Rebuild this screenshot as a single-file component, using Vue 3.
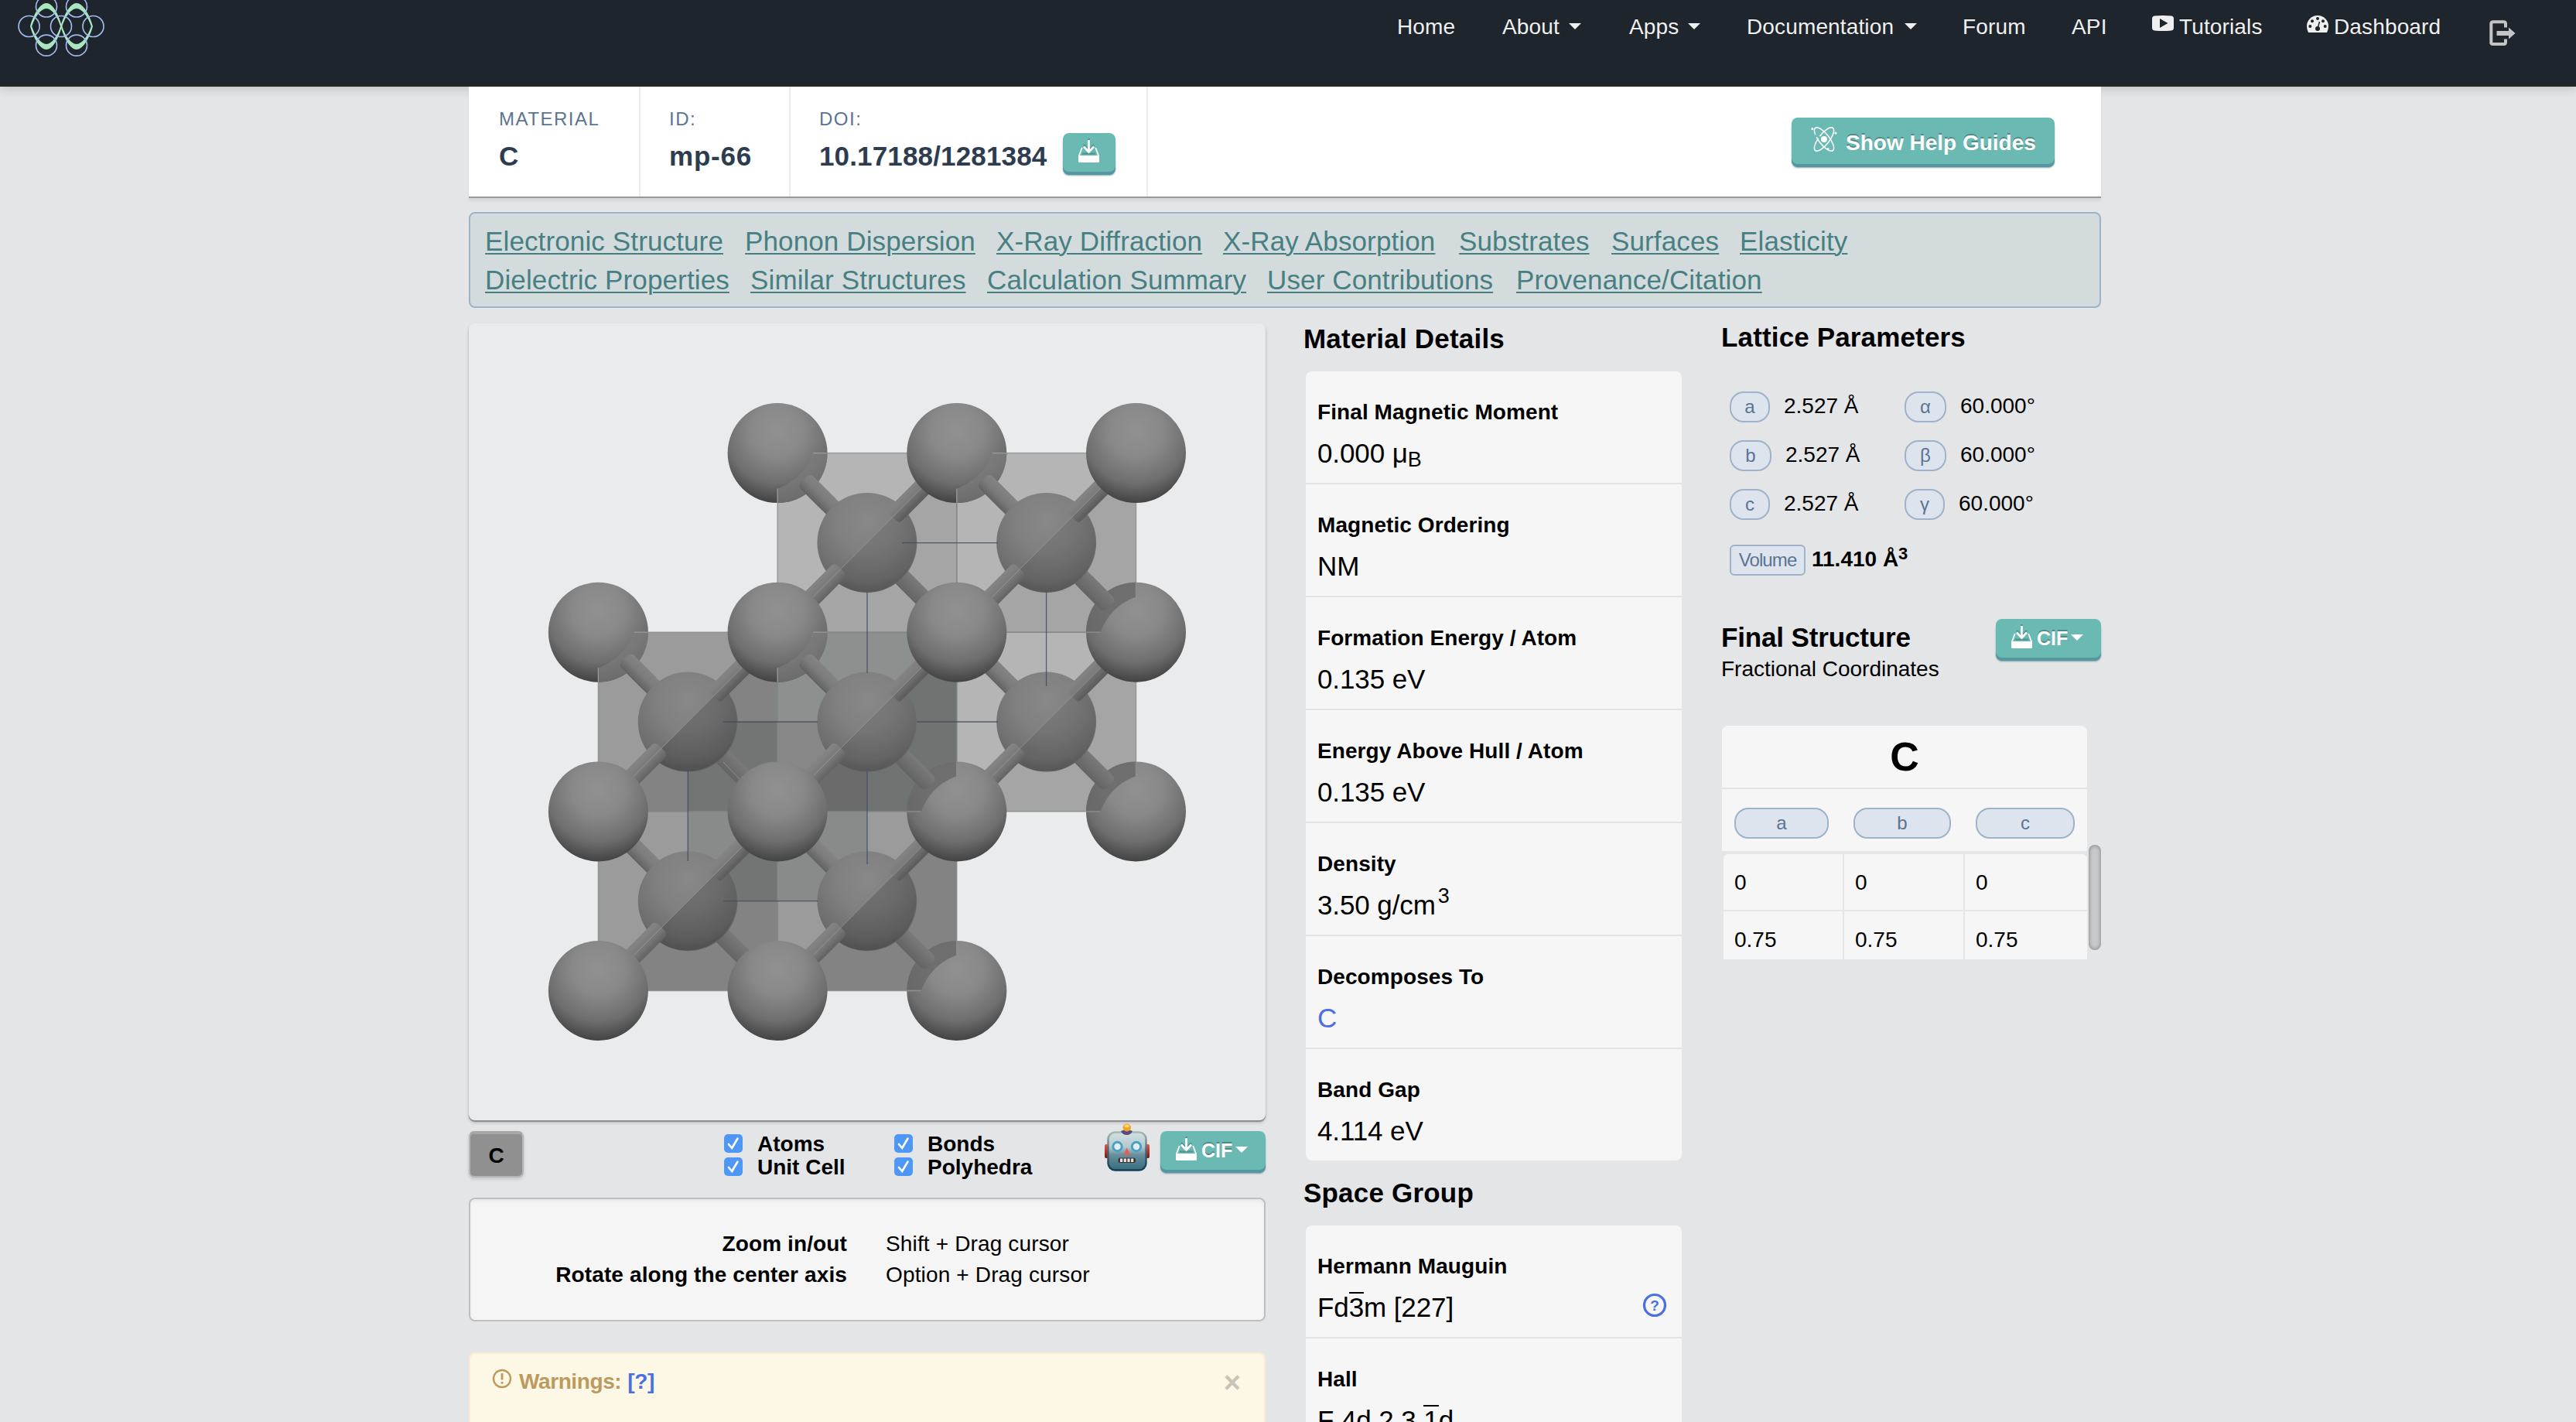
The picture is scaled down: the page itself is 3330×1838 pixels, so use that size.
<script setup>
const nav = [
  { label: 'Home', item: 136, text: 80 },
  { label: 'About', item: 164, text: 87, caret: true },
  { label: 'Apps', item: 152, text: 77, caret: true },
  { label: 'Documentation', item: 279, text: 205, caret: true },
  { label: 'Forum', item: 141, text: 90 },
  { label: 'API', item: 105, text: 60 },
]

const links = [
  [
    ['Electronic Structure', 336], ['Phonon Dispersion', 325], ['X-Ray Diffraction', 293],
    ['X-Ray Absorption', 305], ['Substrates', 197], ['Surfaces', 166], ['Elasticity', 140],
  ],
  [
    ['Dielectric Properties', 343], ['Similar Structures', 306], ['Calculation Summary', 362],
    ['User Contributions', 322], ['Provenance/Citation', 320],
  ],
]

const details = [
  { label: 'Final Magnetic Moment', value: '0.000 μ', sub: 'B' },
  { label: 'Magnetic Ordering', value: 'NM' },
  { label: 'Formation Energy / Atom', value: '0.135 eV' },
  { label: 'Energy Above Hull / Atom', value: '0.135 eV' },
  { label: 'Density', value: '3.50 g/cm', sup: '3' },
  { label: 'Decomposes To', value: 'C', link: true },
  { label: 'Band Gap', value: '4.114 eV' },
]

const lattice = [
  { k: 'a', v: '2.527 Å', w: 52, g: 'α', a: '60.000°', gw: 54 },
  { k: 'b', v: '2.527 Å', w: 54, g: 'β', a: '60.000°', gw: 54 },
  { k: 'c', v: '2.527 Å', w: 52, g: 'γ', a: '60.000°', gw: 52 },
]

const coords = [['0', '0', '0'], ['0.75', '0.75', '0.75']]

/* Crystal geometry: atoms sit on a square grid, with one more in the middle of each cell */
const U = 231.7
const X = [773.4, 1005.1, 1236.8, 1468.5]
const Y = [585.6, 817.2, 1048.9, 1280.5]
const H = U / 2
const cells = [
  [1, 0, '#b5b5b5', '#a5a5a5'],
  [2, 0, '#b5b5b5', '#a5a5a5'],
  [2, 1, '#b5b5b5', '#a5a5a5'],
  [0, 1, '#9b9b9b', '#838383'],
  [1, 1, '#878787', '#6b6b6b'],
  [0, 2, '#9b9b9b', '#838383'],
  [1, 2, '#9b9b9b', '#838383'],
].map(([c, r, light, dark]) => ({
  x: X[c], y: Y[r], cx: X[c] + H, cy: Y[r] + H, light, dark, shade: c === 0 || r === 2 ? 0.16 : 0.09,
}))
const outer = [
  [1, 0, 'tl'], [2, 0, 'tl'], [3, 0], [0, 1, 'tl'], [1, 1, 'tl'], [2, 1], [3, 1, 'br'],
  [0, 2], [1, 2], [2, 2, 'br'], [3, 2, 'br'], [0, 3], [1, 3], [2, 3, 'br'],
].map(([c, r, kind]) => ({ x: X[c], y: Y[r], kind }))
const axes = [
  [1166, 701.7, 1290, 701.7], [935, 933, 1057, 933], [1185, 933, 1290, 933], [935, 1164.7, 1057, 1164.7],
  [1121, 765, 1121, 870], [1121, 997, 1121, 1117], [1352.6, 765, 1352.6, 887], [889.3, 997, 889.3, 1113],
]
</script>

<template>
  <div class="page">
    <svg class="sprite" aria-hidden="true">
      <symbol id="tray" viewBox="0 0 27 32">
        <path d="M4.8 12 L1 22 M22.2 12 L26 22" stroke="#fff" stroke-width="1.8" fill="none" />
        <path d="M5 19.5h17" stroke="#4b9490" stroke-width="2" />
        <path d="M0 22h27v7.5q0 1.500-1.500 1.500h-24q-1.500 0-1.500-1.500z" fill="#fff" />
        <path d="M13.500 1v15M7 9.500l6.500 7.500 6.500-7.500" fill="none" stroke="#4b9490" stroke-width="2.600" transform="translate(0 -1.500)" />
        <path d="M13.500 2v15M7 10.500l6.500 7 6.500-7" fill="none" stroke="#fff" stroke-width="2.700" />
      </symbol>
    </svg>

    <nav class="navbar">
      <svg class="logo" width="160" height="100" viewBox="0 0 160 100">
        <g fill="#a9e6c0" fill-rule="evenodd">
          <path d="M39 34C42 22 51 4 60 4s17 18 20 30c-3 12-11 30-20 30S42 46 39 34zM41.200 34C45 46 53 57 60 57s14.500-11 18-23C74.500 22 67 11 60 11S45 22 41.200 34z" />
          <path d="M78.500 34C81.500 22 90 4 99 4s18 18 21 30c-3 12-12 30-21 30S81.500 46 78.500 34zM80.500 34C84 46 92 57 99 57s15-11 18.800-23C114 22 106 11 99 11S84 22 80.500 34z" />
        </g>
        <g fill="none" stroke="#a3b9ee" stroke-width="1.700">
          <circle cx="37.600" cy="34" r="13.500" /><circle cx="79" cy="34" r="13.500" /><circle cx="120.500" cy="34" r="13.500" />
          <circle cx="60" cy="8.500" r="13.500" /><circle cx="99" cy="8.500" r="13.500" />
          <circle cx="60" cy="58.700" r="13.500" /><circle cx="99" cy="58.700" r="13.500" />
        </g>
      </svg>
      <div class="menu">
        <a v-for="n in nav" :key="n.label" class="nav-item" :style="{ width: n.item + 'px' }">
          <span :style="{ width: n.text + 'px' }">{{ n.label }}</span>
          <i v-if="n.caret" class="caret"></i>
        </a>
        <a class="nav-item tutorials">
          <svg width="28" height="20" viewBox="0 0 28 20"><path fill="#efefef" fill-rule="evenodd" d="M3 .5Q14-.5 25 .5 28 1 28 4v12q0 3-3 3.500Q14 20.500 3 19.500 0 19 0 16V4Q0 1 3 .5zM10 4v12l10.500-6z" /></svg>
          <span>Tutorials</span>
        </a>
        <a class="nav-item dashboard">
          <svg width="28" height="22" viewBox="0 0 28 22">
            <path fill="#efefef" d="M2 22Q0 18 0 14a14 14 0 0 1 28 0q0 4-2 8z" />
            <g fill="#1e252d"><circle cx="4.300" cy="14" r="2" /><circle cx="7" cy="7.200" r="2" /><circle cx="14" cy="4" r="2" /><circle cx="21" cy="7.200" r="2" /><circle cx="23.700" cy="14" r="2" /><circle cx="14" cy="17" r="3" /></g>
            <path d="M14 17l2.500-9" stroke="#1e252d" stroke-width="1.500" />
          </svg>
          <span>Dashboard</span>
        </a>
        <svg class="logout" width="34" height="34" viewBox="0 0 34 34">
          <path d="M21 9.500V4.500Q21 2.200 18.500 2.200H5Q2.300 2.200 2.300 4.800v24.400Q2.300 31 5 31h13.500Q21 31 21 28.500V24.500" fill="none" stroke="#c4c4c4" stroke-width="4" />
          <path d="M9.500 14H25V9.500l8.500 7.500-8.500 7.500V20H9.500z" fill="#c4c4c4" />
        </svg>
      </div>
    </nav>

    <main class="wrap">
      <header class="head">
        <div class="cell material"><label>MATERIAL</label><div class="val"><b>C</b></div></div>
        <div class="cell mid"><label>ID:</label><div class="val"><b class="mp">mp-66</b></div></div>
        <div class="cell doi">
          <label>DOI:</label>
          <div class="val"><b>10.17188/1281384</b><button class="btn save"><svg width="27" height="32"><use href="#tray" /></svg></button></div>
        </div>
        <button class="btn help">
          <svg width="34" height="34" viewBox="0 0 34 34">
            <g fill="none" stroke="#fff" stroke-width="1.500">
              <ellipse cx="17" cy="17" rx="6.800" ry="18.500" transform="rotate(38 17 17)" stroke-dasharray="38 3 60 2" />
              <ellipse cx="17" cy="17" rx="6.800" ry="18.500" transform="rotate(-38 17 17)" stroke-dasharray="50 3 30 3" />
            </g>
            <circle cx="17" cy="17" r="4" fill="#fff" />
            <circle cx="1.800" cy="3.500" r="1.500" fill="#fff" /><circle cx="32" cy="9" r="1.500" fill="#fff" /><circle cx="22" cy="29.500" r="1.500" fill="#fff" />
          </svg>
          <span>Show Help Guides</span>
        </button>
      </header>

      <section class="links">
        <div v-for="(row, i) in links" :key="i" class="link-row">
          <div v-for="l in row" :key="l[0]" :style="{ width: l[1] + 'px' }"><a>{{ l[0] }}</a></div>
        </div>
      </section>

      <div class="columns">
        <div class="left">
          <div class="viewer">
            <svg width="1030" height="1030" viewBox="606 418 1030 1030">
              <defs>
                <radialGradient id="ball" cx=".5" cy=".28" r=".75">
                  <stop offset="0" stop-color="#919191" /><stop offset=".35" stop-color="#898989" /><stop offset=".7" stop-color="#6e6e6e" /><stop offset="1" stop-color="#3c3c3c" />
                </radialGradient>
                <radialGradient id="core" cx=".5" cy=".28" r=".8">
                  <stop offset="0" stop-color="#888" /><stop offset=".4" stop-color="#808080" /><stop offset=".75" stop-color="#6e6e6e" /><stop offset="1" stop-color="#555" />
                </radialGradient>
                <linearGradient id="rodA" x1="0" y1="0" x2="0" y2="1"><stop offset="0" stop-color="#848484" /><stop offset=".5" stop-color="#7b7b7b" /><stop offset="1" stop-color="#626262" /></linearGradient>
                <linearGradient id="rodB" x1="0" y1="1" x2="0" y2="0"><stop offset="0" stop-color="#646464" /><stop offset=".5" stop-color="#6f6f6f" /><stop offset="1" stop-color="#7a7a7a" /></linearGradient>
              </defs>

              <g v-for="c in cells" :key="'c' + c.x + c.y">
                <path :d="`M${c.x} ${c.y}h${U}l${-U} ${U}z`" :fill="c.light" />
                <path :d="`M${c.x + U} ${c.y}v${U}h${-U}z`" :fill="c.dark" />
              </g>
              <!-- rear polyhedra showing through -->
              <path d="M1005.100 817.200h231.700l-115.850 115.800H1005.100z" fill="#8c908e" />
              <path d="M1236.800 817.200v231.700h-115.850V933z" fill="#6f7372" />
              <path d="M889.300 933h115.800v115.900H889.300zM1005.100 1048.900v115.800H889.300z" fill="#727574" />
              <path d="M889.300 1048.900h115.800l-115.800 115.800zM1005.100 1048.900h115.900v115.800h-115.900z" fill="#888b89" />
              <g fill="none" stroke="#838686" stroke-opacity=".7" stroke-width="1.500">
                <rect v-for="c in cells" :key="'r' + c.x + c.y" :x="c.x" :y="c.y" :width="U" :height="U" />
              </g>

              <g v-for="c in cells" :key="'n' + c.x + c.y" :transform="`translate(${c.cx} ${c.cy})`">
                <rect x="40" y="-11.500" width="90" height="23" fill="url(#rodB)" transform="rotate(45)" />
                <rect x="-130" y="-11.500" width="90" height="23" fill="url(#rodA)" transform="rotate(45)" />
              </g>
              <path d="M935 985l52 54" stroke="#909090" stroke-width="1" />
              <g v-for="c in cells" :key="'i' + c.x + c.y" :transform="`translate(${c.cx} ${c.cy})`">
                <circle r="64.500" fill="url(#core)" />
                <path d="M45.600 -45.600A64.500 64.500 0 0 1 -45.600 45.600z" :fill-opacity="c.shade" fill="#000" />
                <rect x="47" y="-12" width="70" height="24" rx="6" fill="url(#rodA)" transform="rotate(-45)" />
                <rect x="-118" y="-12" width="70" height="24" rx="6" fill="url(#rodA)" transform="rotate(-45)" />
                <rect x="47" y="0" width="70" height="11.500" fill="#000" fill-opacity=".08" transform="rotate(-45)" />
                <path :d="`M${-H} ${H}L${H} ${-H}`" stroke="#989898" stroke-opacity=".8" stroke-width="1" />
              </g>
              <path v-for="(a, i) in axes" :key="'x' + i" :d="`M${a[0]} ${a[1]}L${a[2]} ${a[3]}`" stroke="#414c60" stroke-opacity=".85" stroke-width="1.300" />

              <g v-for="o in outer" :key="'o' + o.x + o.y" :transform="`translate(${o.x} ${o.y})`">
                <circle r="64.500" fill="url(#ball)" />
                <template v-if="o.kind === 'tl'">
                  <path d="M0 46Q34 33 46 0H64.500A64.500 64.500 0 0 1 0 64.500z" fill="#7b7b7b" fill-opacity=".72" />
                  <path d="M0 46V64.500M46 0H64.500" stroke="#9a9a9a" stroke-width="1.300" />
                  <rect x="48" y="-11.500" width="51" height="23" rx="6" fill="url(#rodA)" transform="rotate(45)" />
                </template>
                <template v-if="o.kind === 'br'">
                  <path d="M0 -46Q-34 -33 -46 0H-64.500A64.500 64.500 0 0 1 0 -64.500z" fill="#686868" fill-opacity=".8" />
                  <path d="M0 -46V-64.500M-46 0H-64.500" stroke="#8f8f8f" stroke-width="1.300" />
                  <rect x="-98" y="-11.500" width="50" height="23" rx="6" fill="url(#rodB)" transform="rotate(45)" />
                </template>
              </g>
            </svg>
          </div>

          <div class="controls">
            <div class="legend">C</div>
            <div class="checks">
              <div v-for="t in ['Atoms', 'Bonds', 'Unit Cell', 'Polyhedra']" :key="t" class="check">
                <svg width="24" height="24" viewBox="0 0 24 24"><rect width="24" height="24" rx="5" fill="#4f97f5" /><path d="M6 13l4.200 5L17.500 5.500" fill="none" stroke="#fff" stroke-width="2.600" stroke-linecap="round" /></svg>
                <b>{{ t }}</b>
              </div>
            </div>
            <svg class="robot" width="58" height="62" viewBox="0 0 58 62">
              <defs>
                <linearGradient id="face" x1="0" y1="0" x2="0" y2="1"><stop offset="0" stop-color="#d3e2e3" /><stop offset=".38" stop-color="#b4c9ce" /><stop offset=".6" stop-color="#668f9b" /><stop offset="1" stop-color="#356c7e" /></linearGradient>
                <linearGradient id="rim" x1="0" y1="0" x2="0" y2="1"><stop offset="0" stop-color="#a7b9b4" /><stop offset=".5" stop-color="#4a6570" /><stop offset="1" stop-color="#123f52" /></linearGradient>
                <linearGradient id="ear" x1="0" y1="0" x2="0" y2="1"><stop offset="0" stop-color="#ec5548" /><stop offset="1" stop-color="#7c1610" /></linearGradient>
              </defs>
              <rect x="0" y="27" width="7" height="18" rx="2" fill="url(#ear)" /><rect x="51" y="27" width="7" height="18" rx="2" fill="url(#ear)" />
              <rect x="4.500" y="11.500" width="49" height="49" rx="9" fill="url(#face)" stroke="url(#rim)" stroke-width="2.500" />
              <path d="M21 10q8-4 15 0-2 5-7.500 5T21 10z" fill="#5b4a80" />
              <ellipse cx="28.700" cy="5.500" rx="5.200" ry="5" fill="#f4a11f" /><ellipse cx="28.700" cy="3.500" rx="3" ry="2" fill="#ffdc70" />
              <g fill="#e4eef0" stroke="#49a0c4" stroke-width="3"><circle cx="16.500" cy="30" r="5.700" /><circle cx="41" cy="30" r="5.700" /></g>
              <path d="M28.700 31.500l4.600 9.500h-9.200z" fill="#df6257" />
              <rect x="17.500" y="44.500" width="22.500" height="6.500" rx="2.500" fill="#3b3434" />
              <path d="M20 47.700h17.500" stroke="#e8e4dc" stroke-width="4.500" stroke-dasharray="3.200 1.500" />
            </svg>
            <button class="btn cif"><svg width="27" height="32"><use href="#tray" /></svg><span>CIF</span><i class="caret"></i></button>
          </div>

          <div class="hints">
            <b>Zoom in/out</b><span>Shift + Drag cursor</span>
            <b>Rotate along the center axis</b><span>Option + Drag cursor</span>
          </div>

          <div class="warning">
            <svg width="26" height="26" viewBox="0 0 26 26"><circle cx="13" cy="13" r="11" fill="none" stroke="#bd9a5c" stroke-width="2.400" /><path d="M13 6v8.500M13 17v2.800" stroke="#bd9a5c" stroke-width="2.800" /></svg>
            <b>Warnings:</b><a>[?]</a><span class="close">×</span>
          </div>
        </div>

        <div class="middle">
          <h3>Material Details</h3>
          <div class="card">
            <div v-for="d in details" :key="d.label" class="row">
              <b>{{ d.label }}</b>
              <p :class="{ blue: d.link }">{{ d.value }}<sub v-if="d.sub">{{ d.sub }}</sub><sup v-if="d.sup">{{ d.sup }}</sup></p>
            </div>
          </div>
          <h3 class="space">Space Group</h3>
          <div class="card">
            <div class="row">
              <b>Hermann Mauguin</b>
              <p>Fd<span class="bar">3</span>m [227]
                <svg class="ask" width="32" height="32" viewBox="0 0 32 32"><circle cx="16" cy="16" r="13.500" fill="none" stroke="#4a6fe0" stroke-width="3.200" /><text x="16" y="22.500" text-anchor="middle">?</text></svg>
              </p>
            </div>
            <div class="row"><b>Hall</b><p>F 4d 2 3 <span class="bar">1</span>d</p></div>
          </div>
        </div>

        <div class="right">
          <h3>Lattice Parameters</h3>
          <div class="lattice">
            <div v-for="l in lattice" :key="l.k" class="lat-row">
              <div class="pair"><span class="badge" :style="{ width: l.w + 'px' }">{{ l.k }}</span><span class="num">{{ l.v }}</span></div>
              <div class="pair"><span class="badge" :style="{ width: l.gw + 'px' }">{{ l.g }}</span><span class="num">{{ l.a }}</span></div>
            </div>
          </div>
          <div class="volume"><span class="badge square">Volume</span><b>11.410 Å<sup>3</sup></b></div>
          <div class="final">
            <div><h3>Final Structure</h3><p>Fractional Coordinates</p></div>
            <button class="btn cif"><svg width="27" height="32"><use href="#tray" /></svg><span>CIF</span><i class="caret"></i></button>
          </div>
          <div class="table-area">
            <div class="table">
              <div class="element">C</div>
              <div class="heads"><span class="badge">a</span><span class="badge">b</span><span class="badge">c</span></div>
              <div class="body">
                <template v-for="(r, i) in coords" :key="i"><div v-for="(v, j) in r" :key="j">{{ v }}</div></template>
              </div>
            </div>
            <div class="scroll"></div>
          </div>
        </div>
      </div>
    </main>
  </div>
</template>

<style>
body { margin: 0; background: #e4e5e7; overflow: hidden; }
</style>

<style scoped>
* { box-sizing: border-box; }
.page { width: 3330px; height: 1838px; overflow: hidden; background: #e4e5e7; font-family: "Liberation Sans", Arial, sans-serif; font-size: 28px; line-height: 40px; color: #000; white-space: nowrap; }
.sprite { position: absolute; width: 0; height: 0; }
h3, p { margin: 0; }
h3 { font-size: 35px; line-height: 40px; letter-spacing: .15px; }
.navbar { height: 112px; background: #1e252d; border-bottom: 2px solid #272727; box-shadow: 0 2px 12px rgba(0, 0, 0, .18); display: flex; justify-content: space-between; }
.menu { display: flex; width: 1525px; padding-top: 14px; color: #f0f0f0; }
.nav-item { display: flex; flex: none; align-items: flex-start; letter-spacing: .14px; text-shadow: 0 -1px 0 rgba(0, 0, 0, .3); }
.nav-item > span { flex: none; margin-top: 1px; padding-left: 1px; }
.caret { width: 0; height: 0; border: 8px solid transparent; border-top-color: #efefef; border-bottom: 0; margin-top: 16px; }
.tutorials { width: 200px; }
.dashboard { width: 236px; }
.tutorials svg, .dashboard svg { margin: 6px 6px 0 0; }
.logout { margin-top: 12px; }

.btn { display: flex; align-items: flex-start; border: 0; padding: 0; margin: 0; background: #6bb9b3; border-radius: 8px; box-shadow: 0 4px 0 #55979f, 0 5px 2px rgba(60, 110, 120, .6); color: #fff; font: bold 28px/40px "Liberation Sans", Arial, sans-serif; text-shadow: 0 -2px 0 rgba(0, 0, 0, .25); }
.btn svg { flex: none; }

.wrap { width: 2110px; margin-left: 606px; }
.head { position: relative; height: 144px; background: #fff; border-bottom: 2px solid #999; box-shadow: 0 4px 3px rgba(0, 0, 0, .06); display: flex; }
.cell { padding: 27px 0 0 37px; border-right: 2px solid #eaecee; }
.material { width: 222px; padding-left: 39px; }
.mid { width: 194px; }
.doi { width: 462px; }
.cell label { display: block; font-size: 24px; line-height: 30px; letter-spacing: 1.5px; color: #5b7493; }
.val { display: flex; margin-top: 3px; }
.val b { font-size: 35px; line-height: 50px; margin-top: 5px; color: #2d3c4f; letter-spacing: .15px; }
.val .mp { letter-spacing: .8px; }
.save { width: 68px; height: 50px; margin-left: 21px; padding: 7px 0 0 20px; }
.help { width: 340px; height: 60px; margin: 40px 60px 0 auto; padding: 11px 0 0 25px; }
.help span { margin: 2px 0 0 11px; }

.links { margin-top: 18px; height: 124px; border: 2px solid #9fb2c9; border-radius: 8px; background: #d4dbdd; padding: 11px 0 0 19px; font-size: 35px; line-height: 50px; letter-spacing: .13px; color: #478083; }
.link-row { display: flex; }
.link-row div { flex: none; }
.links a { text-decoration: underline; text-decoration-thickness: 2px; text-underline-offset: 3px; }

.columns { display: flex; align-items: flex-start; margin-top: 20px; }
.left { width: 1030px; }
.viewer { height: 1030px; border-radius: 8px; background: #e9ebec; box-shadow: 0 2px 1px #8d8d8d, 0 3px 4px rgba(0, 0, 0, .2); }
.viewer svg { display: block; }
.controls { display: flex; align-items: flex-start; height: 100px; padding-top: 14px; }
.legend { width: 71px; height: 60px; border-radius: 7px; border: 2px solid #b6b6b6; border-top: 4px solid #a6a6a6; background: #909090; box-shadow: 0 2px 4px rgba(0, 0, 0, .15); font-weight: bold; text-align: center; line-height: 56px; }
.checks { display: grid; grid-template-columns: 220px 272px; grid-auto-rows: 30px; margin-left: 259px; }
.check { display: flex; line-height: 34px; }
.check svg { margin: 4px 19px 0 0; }
.robot { margin: -10px 14px 0 0; }
.cif { width: 136px; height: 50px; padding: 7px 0 0 20px; font-size: 25px; }
.cif span { line-height: 36px; margin: 0 4px 0 6px; }
.cif .caret { margin-top: 13px; border-top-color: #fff; }
.hints { height: 160px; border: 2px solid #bfbfbf; border-radius: 8px; background: #f5f5f5; box-shadow: inset 0 3px 4px rgba(0, 0, 0, .05); padding: 38px 0 0; display: grid; grid-template-columns: 487px 500px; column-gap: 50px; grid-auto-rows: 40px; }
.hints b { text-align: right; letter-spacing: .12px; }
.hints span { letter-spacing: .15px; }
.warning { margin-top: 40px; height: 120px; border: 2px solid #faebd3; border-radius: 8px; background: #fdf7e5; padding: 16px 30px 0 28px; display: flex; color: #bd9a5c; text-shadow: 0 2px 0 rgba(255, 255, 255, .5); }
.warning svg { margin: 3px 9px 0 0; }
.warning b { letter-spacing: -.4px; }
.warning a { color: #4a6fe0; font-weight: bold; margin-left: 8px; letter-spacing: -.3px; }
.close { margin-left: auto; font-size: 38px; font-weight: bold; color: #c8c4b6; line-height: 43px; }

.middle { width: 488px; margin: 0 52px 0 50px; }
.middle h3 { padding-bottom: 22px; letter-spacing: .2px; margin-left: -1px; }
.card { margin-left: 2px; border-radius: 8px; background: #f6f6f6; overflow: hidden; }
.row { height: 146px; border-bottom: 2px solid #e3e4e6; padding: 33px 0 0 15px; }
.row b { display: block; letter-spacing: .08px; }
.row p { position: relative; font-size: 35px; line-height: 50px; margin-top: 8px; letter-spacing: -.1px; }
.row:last-child { border-bottom: 0; height: 144px; }
.row sub, .row sup { font-size: 27px; line-height: 0; vertical-align: baseline; position: relative; }
.row sub { top: 5px; }
.row sup { top: -15px; margin-left: 3px; }
.row .blue { color: #4a6fe0; }
.middle .space { padding: 22px 0; }
.bar { position: relative; }
.bar::after { content: ""; position: absolute; left: 0; right: 0; top: 0; height: 2px; background: #000; }
.ask { position: absolute; right: 19px; top: 6px; font: bold 19px "Liberation Sans", sans-serif; fill: #4a6fe0; }

.right { width: 490px; margin-top: -2px; }
.lattice { margin: 50px 0 0 10px; }
.lat-row { display: flex; height: 63px; }
.pair { width: 226px; display: flex; }
.badge { display: block; height: 40px; border: 2px solid #9fb2c9; border-radius: 18px; background: #dde4ed; color: #5b7493; font-size: 24px; line-height: 36px; text-align: center; }
.num { margin: -1px 0 0 18px; }
.volume { display: flex; margin: 9px 0 0 10px; }
.volume b { margin: -1px 0 0 8px; }
.volume sup { font-size: 22px; line-height: 0; vertical-align: 9px; }
.square { width: 98px; border-radius: 6px; letter-spacing: -.9px; }
.final { display: flex; justify-content: space-between; height: 138px; margin-top: 56px; }
.final h3 { margin-top: 4px; letter-spacing: -.15px; }
.final p { line-height: 38px; margin-top: 2px; }
.right h3, .final p { margin-left: -1px; }
.table-area { display: flex; }
.table { width: 472px; height: 302px; overflow: hidden; border-radius: 8px 8px 0 0; }
.element { height: 82px; background: #f6f6f6; border-bottom: 2px solid #e3e4e6; font-size: 52px; font-weight: bold; text-align: center; line-height: 80px; }
.heads { height: 80px; background: #f6f6f6; padding: 24px 16px 0; display: grid; grid-template-columns: 122px 126px 128px; column-gap: 32px; }
.body { display: grid; grid-template-columns: 154px 154px 158px; grid-auto-rows: 72px; gap: 2px; margin: 4px 0 0 2px; border-radius: 6px; overflow: hidden; }
.body div { background: #f6f6f6; padding: 17px 0 0 14px; }
.scroll { width: 16px; height: 136px; margin: 154px 0 0 2px; border-radius: 8px; background: #c9cacc; box-shadow: inset 0 0 5px 1px #8e8f91; }
</style>
